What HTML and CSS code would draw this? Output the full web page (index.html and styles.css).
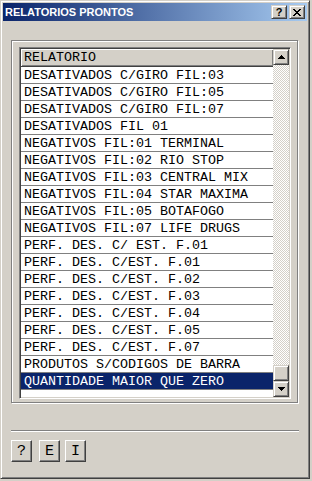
FILE: index.html
```html
<!DOCTYPE html>
<html>
<head>
<meta charset="utf-8">
<link rel="stylesheet" href="styles.css">
</head>
<body>
<div class="window">
  <div class="titlebar">
    <span class="title">RELATORIOS PRONTOS</span>
    <div class="tbtns">
      <div class="tbtn help">?</div>
      <div class="tbtn close">
        <svg width="8" height="7" viewBox="0 0 8 7"><path d="M0 0h2v1h1v1h2V1h1V0h2v1H7v1H6v1H5v1h1v1h1v1h1v1H6V6H5V5H3v1H2v1H0V6h1V5h1V4h1V3H2V2H1V1H0z" fill="#000"/></svg>
      </div>
    </div>
  </div>
  <div class="frame">
    <div class="list">
      <div class="rows">
        <div class="header">RELATORIO</div>
        <div class="row">DESATIVADOS C/GIRO FIL:03</div>
        <div class="row">DESATIVADOS C/GIRO FIL:05</div>
        <div class="row">DESATIVADOS C/GIRO FIL:07</div>
        <div class="row">DESATIVADOS FIL 01</div>
        <div class="row">NEGATIVOS FIL:01 TERMINAL</div>
        <div class="row">NEGATIVOS FIL:02 RIO STOP</div>
        <div class="row">NEGATIVOS FIL:03 CENTRAL MIX</div>
        <div class="row">NEGATIVOS FIL:04 STAR MAXIMA</div>
        <div class="row">NEGATIVOS FIL:05 BOTAFOGO</div>
        <div class="row">NEGATIVOS FIL:07 LIFE DRUGS</div>
        <div class="row">PERF. DES. C/ EST. F.01</div>
        <div class="row">PERF. DES. C/EST. F.01</div>
        <div class="row">PERF. DES. C/EST. F.02</div>
        <div class="row">PERF. DES. C/EST. F.03</div>
        <div class="row">PERF. DES. C/EST. F.04</div>
        <div class="row">PERF. DES. C/EST. F.05</div>
        <div class="row">PERF. DES. C/EST. F.07</div>
        <div class="row">PRODUTOS S/CODIGOS DE BARRA</div>
        <div class="row selected">QUANTIDADE MAIOR QUE ZERO</div>
      </div>
      <div class="scrollbar">
        <div class="sbtn"><svg width="7" height="4" viewBox="0 0 7 4"><path d="M3 0h1v1h1v1h1v1h1v1H0V3h1V2h1V1h1z" fill="#000"/></svg></div>
        <div class="track"></div>
        <div class="sbtn thumb"></div>
        <div class="sbtn"><svg width="7" height="4" viewBox="0 0 7 4"><path d="M0 0h7v1H6v1H5v1H4v1H3V3H2V2H1V1H0z" fill="#000"/></svg></div>
      </div>
    </div>
  </div>
  <div class="separator"></div>
  <div class="buttons">
    <div class="btn b1">?</div>
    <div class="btn b2">E</div>
    <div class="btn b3">I</div>
  </div>
</div>
</body>
</html>
```

FILE: styles.css
```css
html, body {
  margin: 0;
  padding: 0;
  background: #d4d0c8;
}

.window {
  width: 310px;
  height: 479px;
  box-sizing: border-box;
  border: 1px solid;
  border-color: #d4d0c8 #404040 #404040 #d4d0c8;
  box-shadow: inset 1px 1px 0 #fff, inset -1px -1px 0 #808080;
  padding: 2px;
  background: #d4d0c8;
  display: flex;
  flex-direction: column;
}

.titlebar {
  height: 18px;
  background: linear-gradient(to right, #0a246a, #a6caf0);
  display: flex;
  align-items: center;
  justify-content: space-between;
  padding-left: 2px;
}

.title {
  font-family: "Liberation Sans", Arial, sans-serif;
  font-weight: bold;
  font-size: 11px;
  color: #fff;
}

.tbtns {
  display: flex;
  gap: 2px;
  margin-right: 2px;
}

.tbtn {
  width: 16px;
  height: 14px;
  box-sizing: border-box;
  border: 1px solid;
  border-color: #d4d0c8 #404040 #404040 #d4d0c8;
  box-shadow: inset 1px 1px 0 #fff, inset -1px -1px 0 #808080;
  background: #d4d0c8;
  display: flex;
  align-items: center;
  justify-content: center;
  font-family: "Liberation Sans", Arial, sans-serif;
  font-weight: bold;
  font-size: 11px;
  line-height: 12px;
  color: #000;
}

.frame {
  margin: 19px 0 0 8px;
  width: 287px;
  height: 363px;
  box-sizing: border-box;
  border: 1px solid #808080;
  box-shadow: inset 1px 1px 0 #fff, 1px 1px 0 #fff;
  padding: 6px 0 0 7px;
}

.list {
  width: 272px;
  height: 352px;
  box-sizing: border-box;
  border: 1px solid;
  border-color: #808080 #fff #fff #808080;
  box-shadow: inset 1px 1px 0 #404040, inset -1px -1px 0 #d4d0c8;
  padding: 1px;
  display: flex;
  background: #fff;
}

.rows {
  flex: 1;
  background: #fff;
  font-family: "Liberation Mono", "Courier New", monospace;
  font-size: 13.33px;
  color: #000;
  overflow: hidden;
}

.header {
  height: 18px;
  box-sizing: border-box;
  background: #d4d0c8;
  border-bottom: 1px solid #404040;
  box-shadow: inset 1px 1px 0 #fff, inset 0 -1px 0 #808080, inset -1px 0 0 #808080;
  padding: 1px 0 0 3px;
  line-height: 16px;
  white-space: nowrap;
}

.row {
  height: 17px;
  box-sizing: border-box;
  border-bottom: 1px solid #808080;
  padding: 1px 0 0 3px;
  line-height: 16px;
  white-space: nowrap;
}

.row.selected {
  background: #0a246a;
  color: #fff;
}

.scrollbar {
  width: 16px;
  display: flex;
  flex-direction: column;
}

.sbtn {
  width: 16px;
  height: 16px;
  box-sizing: border-box;
  border: 1px solid;
  border-color: #d4d0c8 #404040 #404040 #d4d0c8;
  box-shadow: inset 1px 1px 0 #fff, inset -1px -1px 0 #808080;
  background: #d4d0c8;
  display: flex;
  align-items: center;
  justify-content: center;
}

.track {
  flex: 1;
  background: repeating-conic-gradient(#fff 0 25%, #d4d0c8 0 50%) 0 0 / 2px 2px;
}

.separator {
  margin: 27px 0 0 8px;
  width: 288px;
  border-top: 1px solid #808080;
  border-bottom: 1px solid #fff;
}

.buttons {
  display: flex;
  margin: 8px 0 0 8px;
}

.btn {
  width: 21px;
  height: 22px;
  box-sizing: border-box;
  border: 1px solid;
  border-color: #fff #404040 #404040 #fff;
  box-shadow: inset -1px -1px 0 #808080;
  background: #d4d0c8;
  display: flex;
  align-items: center;
  justify-content: center;
  font-family: "Liberation Mono", "Courier New", monospace;
  font-size: 15px;
  color: #000;
}

.b2 { margin-left: 7px; }
.b3 { margin-left: 5px; }
```
